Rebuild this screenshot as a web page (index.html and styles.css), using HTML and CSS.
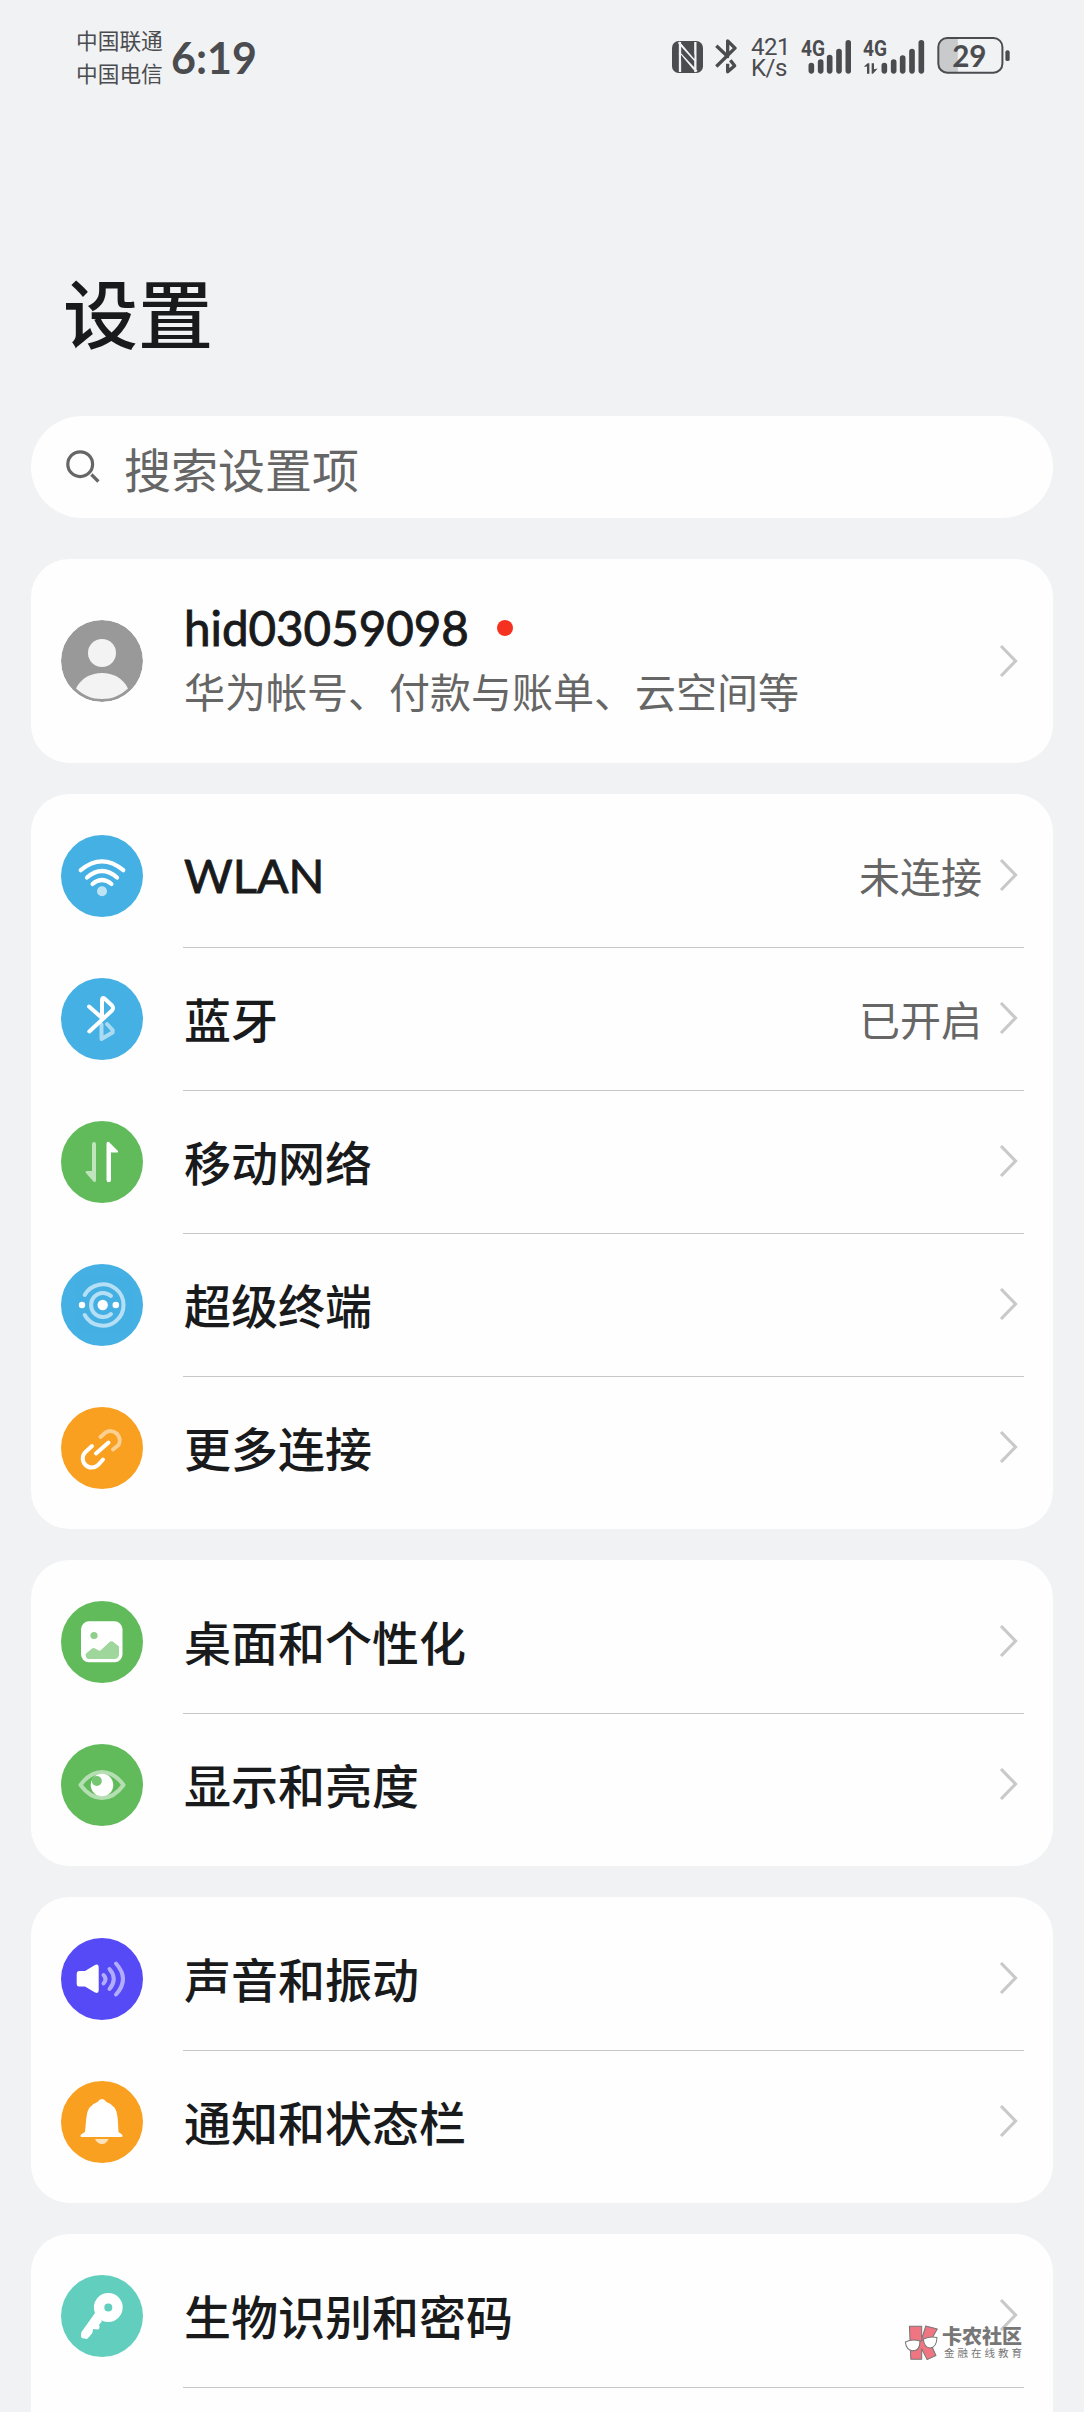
FILE: index.html
```html
<!DOCTYPE html>
<html lang="zh-CN">
<head>
<meta charset="utf-8">
<title>设置</title>
<link rel="stylesheet" href="styles.css">
</head>
<body>
<svg class="defs" width="0" height="0" aria-hidden="true">
  <symbol id="chevron" viewBox="0 0 20 36"><path d="M2 3 16.5 18 2 33" fill="none" stroke="#c9c9c9" stroke-width="3.2"/></symbol>
</svg>
<header class="status">
  <div class="carriers"><span>中国联通</span><span>中国电信</span></div>
  <div class="clock">6:19</div>
  <div class="indicators">
    <svg class="nfc" viewBox="0 0 93 96"><rect width="93" height="96" rx="20" fill="#4b4c4f"/><path d="M24 3V93M20 4 72 61M22 36 74 92M70 3V93" fill="none" stroke="#f1f2f4" stroke-width="7"/><path d="M27 6 67 54V41L38 3zM27 41 67 90H54L27 56z" fill="#4b4c4f"/></svg>
    <svg class="bt" viewBox="0 0 66 104"><g fill="none" stroke="#4b4c4f" stroke-width="10" stroke-linejoin="round"><path d="M4 20 38 52V5L60 27 4 82"/><path d="M38 74V98L59 80 46 63"/></g></svg>
    <div class="speed"><span>421</span><span>K/s</span></div>
    <svg class="signal" viewBox="0 0 150 104"><text x="0" y="50" textLength="72" lengthAdjust="spacingAndGlyphs">4G</text><g class="bars"><path d="M31 79V95M59 69V95M86 55V95M114 37V95M142 11V95"/></g></svg>
    <svg class="signal dual" viewBox="0 0 186 104"><text x="0" y="50" textLength="72" lengthAdjust="spacingAndGlyphs">4G</text><path d="M2 83 14 72H19V104H12V82zM26 72H33V90L44 88 30 104H26z" fill="#4b4c4f"/><g class="bars"><path d="M64 79V95M92 69V95M119 57V95M147 37V95M175 11V95"/></g></svg>
    <svg class="battery" viewBox="0 0 222 112"><path d="M26 4H62V108H26Q4 108 4 84V28Q4 4 26 4z" fill="#c9cacc"/><rect x="3" y="3" width="194" height="105" rx="27" fill="none" stroke="#4b4c4f" stroke-width="6"/><rect x="206" y="40" width="13" height="33" rx="6" fill="#4b4c4f"/><text x="45" y="90" textLength="104" lengthAdjust="spacingAndGlyphs">29</text></svg>
  </div>
</header>
<main>
  <h1>设置</h1>
  <div class="search">
    <svg viewBox="0 0 34 34"><circle cx="14.2" cy="14.2" r="12.4"/><path d="m25.4 24.5 7 7"/></svg>
    <span>搜索设置项</span>
  </div>
  <section class="card account">
    <svg class="icon" viewBox="0 0 82 82"><circle cx="41" cy="41" r="41" fill="#999"/><circle cx="41" cy="33" r="14" fill="#f3f3f3"/><path d="M15 68.5C20 58 30 53 41 53S62 58 67 68.5C59 76 51 79 41 79S23 76 15 68.5z" fill="#f3f3f3"/></svg>
    <div class="who"><div class="name"><span>hid03059098</span><i class="dot"></i></div><div class="sub">华为帐号、付款与账单、云空间等</div></div>
    <svg class="chev"><use href="#chevron"/></svg>
  </section>

  <section class="card">
    <div class="row">
      <svg class="icon blue" viewBox="0 0 82 82"><g fill="none" stroke="#fff" stroke-width="4.2" stroke-linecap="round"><path d="M19.7 35.2Q41 17.5 62.3 35.2M26 42.5Q41 29.5 56 42.5M31.5 49Q41 41 50.500 49"/></g><circle cx="41" cy="56.300" r="5" fill="#fff" opacity=".65"/></svg>
      <div class="line"><span class="label latin">WLAN</span><span class="value">未连接</span><svg class="chev"><use href="#chevron"/></svg></div>
    </div>
    <div class="row">
      <svg class="icon blue" viewBox="0 0 82 82"><g fill="none" stroke="#fff" stroke-width="4" stroke-linecap="round" stroke-linejoin="round"><path d="M28 28.500 41 40M28.300 53.500 51 32.500Q53 30 51 27.500L44 21Q41 18.500 41 22.500V41"/><path d="M40.500 46.500V61L51.500 54.500Q52 53 51.500 52L46 46" opacity=".55"/></g></svg>
      <div class="line"><span class="label">蓝牙</span><span class="value">已开启</span><svg class="chev"><use href="#chevron"/></svg></div>
    </div>
    <div class="row">
      <svg class="icon green" viewBox="0 0 82 82"><path d="M31 23Q31 21 33 21T35 23V59Q35 62 32.500 60.500L24.500 51.500Q24 50 26 50H31z" fill="#fff" opacity=".6"/><path d="M45.500 23Q45.500 20 48 21L57 30Q57.500 31.500 56 31.500H50V59Q50 61.200 47.800 61.200T45.500 59z" fill="#fff"/></svg>
      <div class="line"><span class="label">移动网络</span><svg class="chev"><use href="#chevron"/></svg></div>
    </div>
    <div class="row">
      <svg class="icon blue" viewBox="0 0 82 82"><g fill="none" stroke="#fff" stroke-width="4" stroke-linecap="round" opacity=".6"><path d="M23.700 31A20.700 20.700 0 1 1 23.700 51"/><path d="M50 32A12 12 0 1 0 50 50"/></g><g fill="#fff"><circle cx="41.700" cy="41" r="5.200"/><circle cx="21" cy="41" r="3.200"/><circle cx="54.800" cy="41" r="3.300"/></g></svg>
      <div class="line"><span class="label">超级终端</span><svg class="chev"><use href="#chevron"/></svg></div>
    </div>
    <div class="row">
      <svg class="icon orange" viewBox="0 0 82 82"><g fill="none" stroke="#fff" stroke-width="4" stroke-linecap="round"><path d="M35 46.500 47.500 35.500M31 39 24.500 45A9 9 0 0 0 37 58L42 52.500"/><path d="M39.500 30 44.500 25.500A9.300 9.300 0 0 1 57.500 38L52 42.500" opacity=".5"/></g></svg>
      <div class="line"><span class="label">更多连接</span><svg class="chev"><use href="#chevron"/></svg></div>
    </div>
  </section>

  <section class="card">
    <div class="row">
      <svg class="icon green" viewBox="0 0 82 82"><rect x="20" y="20.300" width="41.500" height="41" rx="8" fill="#fff"/><circle cx="33" cy="34.500" r="3.600" fill="#8fce8b"/><path d="M24.500 53 31 47.500Q33 46 36 48.500T41 48L48 41.500Q50.500 39 53 41.500L58 45.500V53Q58 58 53 58H28Q24.500 58 24.500 53z" fill="#9fd69b"/></svg>
      <div class="line"><span class="label">桌面和个性化</span><svg class="chev"><use href="#chevron"/></svg></div>
    </div>
    <div class="row">
      <svg class="icon green" viewBox="0 0 82 82"><path d="M19.500 41Q29 28 41 28T62.500 41Q53 54 41 54T19.500 41z" fill="none" stroke="#b5dfb2" stroke-width="4" stroke-linejoin="round"/><circle cx="41" cy="41" r="11.300" fill="#fff"/><circle cx="35.800" cy="37" r="5" fill="#76c572"/></svg>
      <div class="line"><span class="label">显示和亮度</span><svg class="chev"><use href="#chevron"/></svg></div>
    </div>
  </section>

  <section class="card">
    <div class="row">
      <svg class="icon purple" viewBox="0 0 82 82"><path d="M18 33H24L34 27Q37.700 25.500 37.700 29.500V52.500Q37.700 56 34 54.500L24 48.500H18Q15.700 48.500 15.700 46V35.500Q15.700 33 18 33z" fill="#fff"/><g fill="none" stroke="#fff" stroke-width="4" stroke-linecap="round" opacity=".55"><path d="M42.500 37Q46.500 41 42.500 45.500M48.500 31Q57 41 48.500 51M55 25.500Q69 41 55 56.500"/></g></svg>
      <div class="line"><span class="label">声音和振动</span><svg class="chev"><use href="#chevron"/></svg></div>
    </div>
    <div class="row">
      <svg class="icon orange" viewBox="0 0 82 82"><path d="M41 18Q43.500 18 45.500 21 56 24.500 56.700 37L57.500 51 61 53.500Q62.500 56 60 56H21Q18.500 56 20 53.500L24 51 25.300 37Q26 24.500 36.500 21 38.500 18 41 18z" fill="#fff"/><path d="M34 58H47.500Q45.500 63 41 63T34 58z" fill="#fff" opacity=".7"/></svg>
      <div class="line"><span class="label">通知和状态栏</span><svg class="chev"><use href="#chevron"/></svg></div>
    </div>
  </section>

  <section class="card">
    <div class="row">
      <svg class="icon teal" viewBox="0 0 82 82"><circle cx="47.300" cy="32.500" r="9.200" fill="none" stroke="#fff" stroke-width="10.400"/><path d="M34 38 20.500 57Q19.500 59 20.500 63L26 64Q29 61.500 31.500 57.500L32 54 37 54.500Q39.500 53 38 50L41 46z" fill="#fff"/></svg>
      <div class="line"><span class="label">生物识别和密码</span><svg class="chev"><use href="#chevron"/></svg></div>
    </div>
    <div class="row"></div>
  </section>
</main>
<aside class="mark">
  <svg viewBox="0 0 100 106"><g fill="#ef7583" stroke="#777" stroke-width="3" stroke-linejoin="round"><path d="M16 4H52V42L64 3 98 12 76 50 94 90 68 102 52 70V101H20z"/></g><g fill="#fff" stroke="#777" stroke-width="3"><path d="M4 50Q24 40 47 47 47 76 26 76 6 74 4 50zM57 41Q78 32 97 37 96 66 77 68 59 66 57 41z"/><path d="M47 49 57 43" fill="none"/></g></svg>
  <div class="mark-text"><b>卡农社区</b><span>金融在线教育</span></div>
</aside>
</body>
</html>
```
FILE: styles.css
```css
* { box-sizing: border-box; }

body {
  margin: 0;
  width: 1084px;
  height: 2412px;
  overflow: hidden;
  position: relative;
  background: #f1f2f4;
  color: #191a1c;
  font-family: "Noto Sans CJK SC", sans-serif;
}

svg { display: block; flex: none; }
.defs { position: absolute; }

/* status bar */
.status {
  height: 116px;
  padding-left: 76px;
  display: flex;
  align-items: center;
  color: #4b4c4f;
}
.carriers {
  display: flex;
  flex-direction: column;
  width: 95px;
  padding-bottom: 4px;
  font-size: 21.7px;
  line-height: 33px;
}
.clock {
  font: 700 43px/50px Lato, sans-serif;
  width: 500px;
}
.indicators {
  display: flex;
  align-items: flex-start;
  height: 42px;
}
.nfc { width: 31px; height: 32px; margin: 4px 12px 0 1px; }
.bt { width: 22px; height: 35px; margin: 2px 14px 0 0; }
.speed {
  display: flex;
  flex-direction: column;
  width: 50px;
  font: 400 24px/21px Roboto, sans-serif;
  letter-spacing: -0.5px;
}
.signal { width: 50px; height: 35px; margin: 2px 12px 0 0; }
.signal.dual { width: 62px; }
.signal text { font: 700 66px Roboto, sans-serif; fill: #4b4c4f; }
.bars { stroke: #4b4c4f; stroke-width: 17; stroke-linecap: round; }
.battery { width: 74px; height: 37px; }
.battery text { font: 700 92px Lato, sans-serif; fill: #4b4c4f; }

main { padding: 0 31px; }
h1 {
  margin: 0;
  padding: 139px 0 0 32px;
  height: 300px;
  font-size: 75px;
  line-height: 112px;
  font-weight: 500;
}
.search {
  height: 102px;
  margin-bottom: 41px;
  padding-left: 35px;
  display: flex;
  align-items: center;
  gap: 24px;
  border-radius: 51px;
  background: #fefefe;
  color: #666;
  font-size: 47px;
}
.search svg { width: 34px; height: 34px; fill: none; stroke: #666; stroke-width: 3.2; }

.card {
  margin-bottom: 31px;
  padding: 10px 29px 10px 30px;
  border-radius: 38px;
  background: #fefefe;
}
.icon { width: 82px; height: 82px; border-radius: 50%; }
.blue { background: #45b0e3; }
.green { background: #61bb5b; }
.orange { background: #f9a021; }
.purple { background: #564af6; }
.teal { background: #62cfbe; }
.chev { width: 20px; height: 36px; margin: 0 5px 0 17px; }

.account {
  height: 204px;
  display: flex;
  align-items: center;
}
.who { flex: 1; margin-left: 41px; }
.name {
  display: flex;
  align-items: center;
  gap: 28px;
  font: 400 47.500px/58px Lato, sans-serif;
  -webkit-text-stroke: 0.9px #191a1c;
}
.dot { width: 16px; height: 16px; border-radius: 50%; background: #f5321f; }
.sub { color: #666; font-size: 41px; line-height: 66px; }

.row {
  height: 143px;
  display: flex;
  align-items: center;
}
.line {
  flex: 1;
  height: 144px;
  margin-left: 40px;
  padding-left: 1px;
  display: flex;
  align-items: center;
  border-bottom: 1px solid #c6c6c8;
}
.row:last-child .line { border-color: transparent; }
.label { flex: 1; font-size: 47px; font-weight: 500; line-height: 60px; }
.latin {
  font-family: Lato, sans-serif;
  font-weight: 400;
  -webkit-text-stroke: 0.9px #191a1c;
}
.value { color: #666; font-size: 41px; }

/* watermark lies over the last row */
.mark {
  position: absolute;
  left: 904px;
  top: 2325px;
  display: flex;
  gap: 4px;
}
.mark svg { width: 34px; height: 36px; }
.mark-text { display: flex; flex-direction: column; color: #777; }
.mark-text b { font-size: 20px; line-height: 22px; font-weight: 900; }
.mark-text span { font-size: 10.500px; line-height: 12px; letter-spacing: 3px; padding-left: 2px; }
```
